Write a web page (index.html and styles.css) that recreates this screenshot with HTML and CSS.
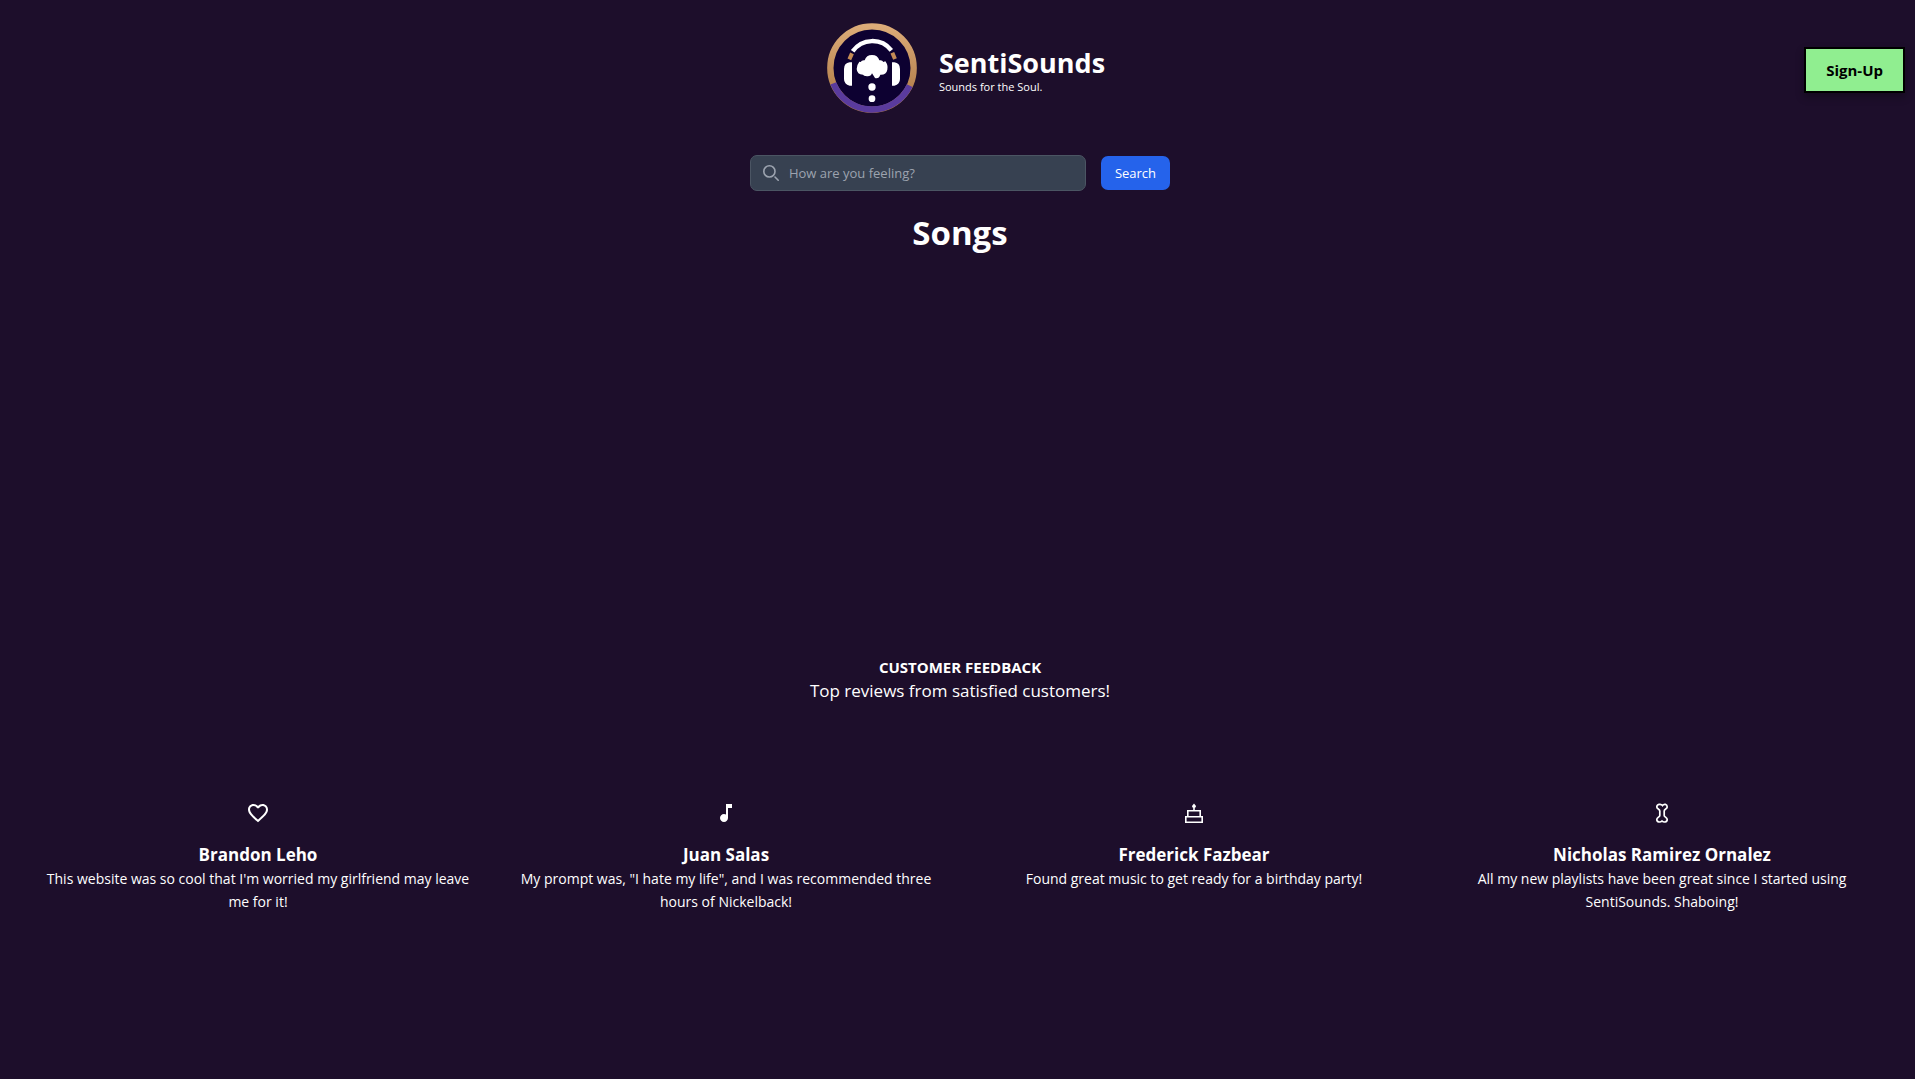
FILE: index.html
```html
<!DOCTYPE html>
<html lang="en">
<head>
<meta charset="utf-8">
<meta name="viewport" content="width=device-width, initial-scale=1">
<title>SentiSounds</title>
<link rel="stylesheet" href="styles.css">
</head>
<body>
<header class="header">
  <div class="brand">
    <svg class="logo" viewBox="0 0 270 270" role="img" aria-label="SentiSounds logo">
      <defs>
        <linearGradient id="bronze" x1="0" y1="0" x2="0" y2="1">
          <stop offset="0" stop-color="#dcac78"/>
          <stop offset="1" stop-color="#a97440"/>
        </linearGradient>
      </defs>
      <circle cx="135" cy="135" r="120" fill="#0d0131"/>
      <circle cx="135" cy="135" r="125" fill="none" stroke="url(#bronze)" stroke-width="19"/>
      <path d="M19 181A125 125 0 0 0 248 188" fill="none" stroke="#5a3b9d" stroke-width="19"/>
      <path d="M77 85A72 72 0 0 1 193 82" fill="none" stroke="#fff" stroke-width="13"/>
      <path d="M75 91L67 109M196 89L204 108" fill="none" stroke="#c48b55" stroke-width="12"/>
      <path d="M75 118V188H68Q51 184 51 168V138Q51 120 68 118ZM195 118V188H202Q219 184 219 168V138Q219 120 202 118Z" fill="#fff"/>
      <path d="M113 112A23 23 0 0 1 157 112Q166 110 169 117L175 115Q184 126 181 140Q178 156 160 155Q156 168 144 165L135 151Q132 161 120 160Q109 158 108 155Q90 155 89 138Q89 126 97 116L101 117Q104 111 113 112Z" fill="#fff"/>
      <circle cx="135" cy="192" r="11" fill="#fff"/>
      <circle cx="135" cy="227" r="10" fill="#fff"/>
    </svg>
    <div class="brand-text">
      <h1 class="brand-name">SentiSounds</h1>
      <p class="tagline">Sounds for the Soul.</p>
    </div>
  </div>
  <button class="signup" type="button">Sign-Up</button>
</header>
<main class="main">
  <form class="search">
    <div class="field">
      <svg class="field-icon" viewBox="0 0 20 20" aria-hidden="true"><path d="m19 19-4-4m0-7A7 7 0 1 1 1 8a7 7 0 0 1 14 0Z" fill="none" stroke="currentColor" stroke-width="2" stroke-linecap="round"/></svg>
      <input class="field-input" type="search" aria-label="Mood" placeholder="How are you feeling?">
    </div>
    <button class="search-button" type="submit">Search</button>
  </form>
  <section class="songs">
    <h2 class="songs-title">Songs</h2>
  </section>
  <section class="feedback">
    <h2 class="feedback-title">CUSTOMER FEEDBACK</h2>
    <p class="feedback-lead">Top reviews from satisfied customers!</p>
    <div class="reviews">
      <article class="review">
        <svg class="review-icon" viewBox="0 0 24 24" aria-hidden="true"><path d="M16.5 3c-1.74 0-3.41.81-4.5 2.09C10.91 3.81 9.24 3 7.5 3 4.42 3 2 5.42 2 8.5c0 3.78 3.4 6.86 8.55 11.54L12 21.35l1.45-1.32C18.6 15.36 22 12.28 22 8.5 22 5.42 19.58 3 16.5 3zm-4.4 15.55-.1.1-.1-.1C7.14 14.24 4 11.39 4 8.5 4 6.5 5.5 5 7.5 5c1.54 0 3.04.99 3.57 2.36h1.87C13.46 5.99 14.96 5 16.5 5c2 0 3.5 1.5 3.5 3.5 0 2.89-3.14 5.74-7.9 10.05z"/></svg>
        <h3 class="review-name">Brandon Leho</h3>
        <p class="review-text">This website was so cool that I'm worried my girlfriend may leave me for it!</p>
      </article>
      <article class="review">
        <svg class="review-icon" viewBox="0 0 24 24" aria-hidden="true"><path d="M12 3v10.55c-.59-.34-1.27-.55-2-.55-2.21 0-4 1.79-4 4s1.79 4 4 4 4-1.79 4-4V7h4V3z"/></svg>
        <h3 class="review-name">Juan Salas</h3>
        <p class="review-text">My prompt was, "I hate my life", and I was recommended three hours of Nickelback!</p>
      </article>
      <article class="review">
        <svg class="review-icon" viewBox="0 0 24 24" aria-hidden="true"><path d="M12 2.500L14 5Q14 6.500 12.800 6.800V9H19V15H21V22H3V15H5V9H11.200V6.800Q10 6.500 10 5ZM6.600 10.600V15H17.400V10.600ZM4.600 16.600V20.400H19.400V16.600Z" fill-rule="evenodd"/></svg>
        <h3 class="review-name">Frederick Fazbear</h3>
        <p class="review-text">Found great music to get ready for a birthday party!</p>
      </article>
      <article class="review">
        <svg class="review-icon" viewBox="0 0 24 24" aria-hidden="true"><path d="M12.500 4.500C11 2.500 6.800 3 6.800 6C6.800 8 9.800 8 9.800 10V14.500C9.800 16 6.800 16.500 6.800 18.500C6.800 21.500 10.500 21.500 12 20C13.500 21.500 17.200 21.500 17.200 18.500C17.200 16.500 14.200 16 14.200 14.500V10C14.200 8 17.200 8 17.200 6C17.200 3 14 2.500 12.500 4.500Z" fill="none" stroke="currentColor" stroke-width="1.700"/></svg>
        <h3 class="review-name">Nicholas Ramirez Ornalez</h3>
        <p class="review-text">All my new playlists have been great since I started using SentiSounds. Shaboing!</p>
      </article>
    </div>
  </section>
</main>
</body>
</html>
```
FILE: styles.css
```css
* {
  box-sizing: border-box;
  margin: 0;
}

body {
  background: #1d0e2b;
  color: #fff;
  font-family: "Segoe UI", "Open Sans", sans-serif;
  font-size: 14px;
  line-height: 23px;
}

button,
input {
  font: inherit;
}

.header {
  display: grid;
  grid-template-columns: 1fr auto 1fr;
  align-items: center;
  padding: 23px 10px 0 27px;
}

.brand {
  grid-column: 2;
  display: flex;
  align-items: center;
  gap: 22px;
}

.logo {
  width: 90px;
  height: 90px;
}

.brand-text {
  padding-top: 6px;
}

.brand-name {
  font-size: 27px;
  line-height: 32px;
}

.tagline {
  font-size: 11px;
  line-height: 16px;
}

.signup {
  justify-self: end;
  margin-top: 4px;
  padding: 10px 20px;
  border: 2px solid #000;
  background: #90ee90;
  color: #000;
  font-size: 15px;
  font-weight: 700;
  line-height: 22px;
  box-shadow: 0 4px 8px rgba(0, 0, 0, 0.3);
}

.main {
  padding: 42px 19px 40px 24px;
  text-align: center;
}

.search {
  display: flex;
  justify-content: center;
  align-items: center;
  gap: 15px;
}

.field {
  display: flex;
  align-items: center;
  gap: 10px;
  width: 336px;
  height: 36px;
  padding: 0 12px;
  border: 1px solid #4b5563;
  border-radius: 7px;
  background: #374151;
  color: #9ca3af;
}

.field-icon {
  width: 16px;
  height: 16px;
}

.field-input {
  flex: 1;
  min-width: 0;
  padding: 0;
  border: 0;
  outline: 0;
  background: none;
  color: #fff;
  font-size: 13px;
}

.field-input::placeholder {
  color: #9ca3af;
}

.search-button {
  height: 34px;
  padding: 0 14px;
  border: 0;
  border-radius: 7px;
  background: #2563eb;
  color: #fff;
  font-size: 13px;
}

.songs {
  min-height: 444px;
  padding-top: 22px;
}

.songs-title {
  font-size: 33px;
  line-height: 40px;
}

.feedback {
  padding-top: 20px;
}

.feedback-title {
  font-size: 15px;
  line-height: 24px;
}

.feedback-lead {
  font-size: 17px;
  line-height: 24px;
}

.reviews {
  display: grid;
  grid-template-columns: repeat(4, 1fr);
  margin-top: 98px;
}

.review {
  padding: 0 16px;
}

.review-icon {
  display: block;
  width: 24px;
  height: 24px;
  margin: 0 auto 18px;
  fill: currentColor;
}

.review-name {
  font-size: 17px;
  line-height: 24px;
}
```
